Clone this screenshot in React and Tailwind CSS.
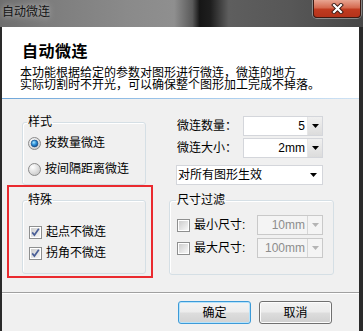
import React from "react";

function Radio({ checked, children }) {
  return (
    <div className="flex items-center h-[16px] gap-[4px]">
      <svg width="13" height="13" viewBox="0 0 13 13" className="shrink-0">
        <defs>
          <radialGradient id="radioBg" cx="0.35" cy="0.3" r="0.75">
            <stop offset="0" stopColor="#ffffff" />
            <stop offset="1" stopColor="#c9c9c9" />
          </radialGradient>
          <radialGradient id="radioDot" cx="0.4" cy="0.35" r="0.7">
            <stop offset="0" stopColor="#a8e6ff" />
            <stop offset="0.5" stopColor="#2b8fd8" />
            <stop offset="1" stopColor="#0c4a8c" />
          </radialGradient>
        </defs>
        <circle cx="6.5" cy="6.5" r="6" fill="url(#radioBg)" stroke="#8a8a8a" />
        {checked && (
          <circle cx="6.5" cy="6.5" r="3.4" fill="url(#radioDot)" stroke="#1d4f86" strokeWidth="0.7" />
        )}
      </svg>
      <span className="leading-[16px]">{children}</span>
    </div>
  );
}

function CheckBox({ checked, children, labelClass = "" }) {
  return (
    <div className="flex items-center h-[16px] gap-[4px]">
      <svg width="13" height="13" viewBox="0 0 13 13" className="shrink-0">
        <defs>
          <linearGradient id="chkBg" x1="0" y1="0" x2="1" y2="1">
            <stop offset="0" stopColor="#cdcdcd" />
            <stop offset="1" stopColor="#f7f7f7" />
          </linearGradient>
        </defs>
        <rect x="0.5" y="0.5" width="12" height="12" fill="#ffffff" stroke="#8e8f8f" />
        <rect x="2" y="2" width="9" height="9" fill="url(#chkBg)" />
        {checked && (
          <path d="M3.2 6.4 L5.4 9 L9.8 2.8" fill="none" stroke="#4a5f97" strokeWidth="1.7" />
        )}
      </svg>
      <span className={`leading-[16px] ${labelClass}`}>{children}</span>
    </div>
  );
}

function Arrow({ color = "#000" }) {
  return (
    <svg width="7" height="4" viewBox="0 0 7 4">
      <path d="M0 0 H7 L3.5 4 Z" fill={color} />
    </svg>
  );
}

function SpinBox({ value, className = "" }) {
  return (
    <div className={`flex h-[20px] w-[80px] border border-[#d4d6db] bg-white ${className}`}>
      <span className="flex-1 text-right pr-[2px] leading-[18px]">{value}</span>
      <span className="w-[15px] flex items-center justify-center bg-[linear-gradient(180deg,#f0f0f0,#dcdcdc)] border-l border-[#e6e6e6]">
        <Arrow />
      </span>
    </div>
  );
}

function DisabledSpin({ value }) {
  return (
    <div className="flex h-[20px] w-[66px] border border-[#c9c9c9] bg-[#f4f4f4]">
      <span className="flex-1 text-right pr-[2px] leading-[18px] text-[#8d8d8d]">{value}</span>
      <span className="w-[15px] flex items-center justify-center border-l border-[#d6d6d6]">
        <Arrow color="#b4b4b4" />
      </span>
    </div>
  );
}

export default function App() {
  return (
    <div className="w-[363px] h-[331px] overflow-hidden flex flex-col bg-[#2a2a2a] text-[12px] text-black font-['Liberation_Sans','Noto_Sans_CJK_SC',sans-serif]">
      {/* title bar */}
      <div className="h-[27px] shrink-0 flex items-start justify-between bg-[linear-gradient(90deg,#6e6e6e_0%,#7c7c7c_12%,#8a8a8a_35%,#8f8f8f_48%,#5a5a5a_53%,#161616_55%,#1e1e1e_58%,#5e5e5e_63%,#575757_80%,#474747_100%)]">
        <span className="pl-[2px] pt-[4px] leading-[16px] text-[#141414] [text-shadow:0_0_6px_rgba(255,255,255,0.7)]">
          自动微连
        </span>
        <div className="mr-[2px] w-[48px] h-[18px] rounded-b-[4px] border border-t-0 border-[#3d1a12] shadow-[0_0_0_1px_rgba(255,255,255,0.35)] bg-[linear-gradient(180deg,#e8a592_0%,#d56a50_45%,#c03b20_55%,#b5321a_100%)] flex items-center justify-center">
          <svg width="13" height="11" viewBox="0 0 13 11">
            <path d="M3 2 L10 9 M10 2 L3 9" stroke="#3a1a14" strokeWidth="4" strokeLinecap="square" />
            <path d="M3 2 L10 9 M10 2 L3 9" stroke="#ffffff" strokeWidth="2.2" strokeLinecap="square" />
          </svg>
        </div>
      </div>

      <div className="flex-1 min-h-0 ml-[2px] mr-[4px] bg-[#f0f0f0] flex flex-col">
        {/* header */}
        <div className="h-[71px] shrink-0 bg-white pt-[15px]">
          <div className="ml-[20px] text-[16px] leading-[20px] font-bold tracking-[0.5px]">自动微连</div>
          <div className="ml-[18px] mt-[5px] leading-[12px]">
            <div>本功能根据给定的参数对图形进行微连，微连的地方</div>
            <div>实际切割时不开光，可以确保整个图形加工完成不掉落。</div>
          </div>
        </div>
        <div className="h-[1px] shrink-0 bg-[linear-gradient(90deg,#6fa6d9,#a9cdee_60%,#cfe2f3)]" />

        {/* main */}
        <div className="flex-1 min-h-0 flex">
          <div className="w-[151px] flex flex-col">
            <fieldset className="ml-[20px] w-[124px] mt-[15px] pb-[7px] border border-[#d5dfe5] rounded-[3px] shadow-[inset_1px_1px_0_#fff]">
              <legend className="ml-[4px] px-[1px] leading-[16px]">样式</legend>
              <div className="ml-[5px] mt-[5px] flex flex-col gap-[10px]">
                <Radio checked>按数量微连</Radio>
                <Radio>按间隔距离微连</Radio>
              </div>
            </fieldset>
            <div className="ml-[5px] w-[146px] border-2 border-[#ea2a2f] pt-[5px] pb-[2px]">
              <fieldset className="ml-[13px] w-[124px] pb-[12px] border border-[#d5dfe5] rounded-[3px] shadow-[inset_1px_1px_0_#fff]">
                <legend className="ml-[4px] px-[1px] leading-[16px]">特殊</legend>
                <div className="ml-[6px] mt-[16px] flex flex-col gap-[5px]">
                  <CheckBox checked>起点不微连</CheckBox>
                  <CheckBox checked>拐角不微连</CheckBox>
                </div>
              </fieldset>
            </div>
          </div>

          <div className="ml-[16px] flex flex-col">
            <div className="mt-[17px] flex items-center h-[20px]">
              <span className="ml-[8px] w-[66px] leading-[16px]">微连数量：</span>
              <SpinBox value="5" />
            </div>
            <div className="mt-[2px] flex items-center h-[20px]">
              <span className="ml-[8px] w-[66px] leading-[16px]">微连大小：</span>
              <SpinBox value="2mm" />
            </div>
            <div className="mt-[7px] ml-[7px] w-[147px] h-[20px] border border-[#d4d6db] bg-white flex items-center justify-between pl-[1px] pr-[5px]">
              <span className="leading-[18px]">对所有图形生效</span>
              <Arrow />
            </div>
            <fieldset className="mt-[7px] w-[165px] pb-[16px] border border-[#d5dfe5] rounded-[3px] shadow-[inset_1px_1px_0_#fff]">
              <legend className="ml-[6px] px-[1px] leading-[16px]">尺寸过滤</legend>
              <div className="mt-[7px] ml-[7px] flex items-center h-[20px]">
                <CheckBox labelClass="w-[63px]">最小尺寸:</CheckBox>
                <DisabledSpin value="10mm" />
              </div>
              <div className="mt-[3px] ml-[7px] flex items-center h-[20px]">
                <CheckBox labelClass="w-[63px]">最大尺寸:</CheckBox>
                <DisabledSpin value="100mm" />
              </div>
            </fieldset>
          </div>
        </div>

        {/* footer */}
        <div className="h-[39px] shrink-0 border-t border-[#a0a0a0] shadow-[inset_0_1px_0_#ffffff] pt-[8px] pr-[27px] flex justify-end items-start gap-[8px]">
          <button className="w-[73px] h-[23px] rounded-[3px] border border-[#3c9ad8] shadow-[inset_0_0_0_1px_#b6e3fb] bg-[linear-gradient(180deg,#f4f4f4_0%,#ececec_48%,#dddddd_52%,#d2d2d2_100%)] leading-[20px]">
            确定
          </button>
          <button className="w-[73px] h-[23px] rounded-[3px] border border-[#707070] shadow-[inset_0_0_0_1px_#fcfcfc] bg-[linear-gradient(180deg,#f2f2f2_0%,#ebebeb_48%,#dddddd_52%,#cfcfcf_100%)] leading-[20px]">
            取消
          </button>
        </div>
      </div>
    </div>
  );
}
